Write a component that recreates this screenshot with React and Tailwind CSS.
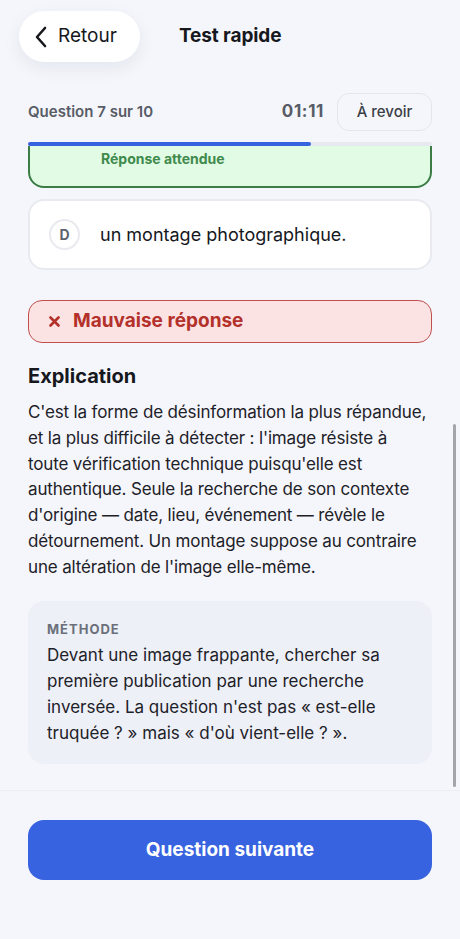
import { useState } from 'react';

// Lines broken as in the design
const explication = [
  "C'est la forme de désinformation la plus répandue,",
  "et la plus difficile à détecter : l'image résiste à",
  "toute vérification technique puisqu'elle est",
  'authentique. Seule la recherche de son contexte',
  "d'origine — date, lieu, événement — révèle le",
  'détournement. Un montage suppose au contraire',
  "une altération de l'image elle-même.",
];

const methode =
  "Devant une image frappante, chercher sa première publication par une recherche inversée. La question n'est pas « est-elle truquée ? » mais « d'où vient-elle ? ».";

export default function App() {
  const [current] = useState(7);
  const total = 10;

  return (
    <div className="h-[939px] flex flex-col bg-[#f4f6fb] text-[#16181d] overflow-hidden" style={{ fontFamily: 'Inter, "Noto Sans", sans-serif' }}>
      {/* Top bar */}
      <header className="pt-[11px] px-[19px] flex items-center">
        <button className="h-[51px] w-[121px] rounded-full bg-white shadow-[0_6px_18px_rgba(20,30,60,0.07)] flex items-center pl-[15px] gap-[10px] text-[19px] text-[#16181d]">
          <svg width="14" height="22" viewBox="0 0 14 22" fill="none">
            <path d="M11 2 L3 11 L11 20" stroke="#16181d" strokeWidth="2.6" strokeLinecap="round" strokeLinejoin="round" />
          </svg>
          Retour
        </button>
        <h1 className="ml-[39px] text-[19px] font-bold tracking-[-0.1px]">Test rapide</h1>
      </header>

      {/* Progress */}
      <div className="px-7 mt-[31px] h-[38px] flex items-center">
        <span className="text-[15px] font-semibold text-[#585c66]">Question {current} sur {total}</span>
        <span className="ml-auto text-[17px] font-bold text-[#585c66] tracking-[0.6px]">01:11</span>
        <button className="ml-[13px] h-[38px] w-[95px] rounded-xl border border-[#e3e6ec] text-[15px] font-medium text-[#3a3e47]">
          À revoir
        </button>
      </div>
      <div className="mx-7 mt-[11px] h-[4px] rounded-full bg-[#e6e9f0]">
        <div className="h-full rounded-full bg-[#3762e0]" style={{ width: `${(current / total) * 100}%` }} />
      </div>

      {/* Scrolled content (the top of the answer list is scrolled out of view) */}
      <div className="relative flex-1 overflow-hidden">
        <div className="px-7">
          <div className="mt-[-59px] rounded-2xl border-2 border-[#3b7d45] bg-[#e1fbe5] pl-[19px] pt-4 pb-[17px]">
            <div className="h-[40px]" />
            <div className="mt-1 pl-[52px] text-[14px] leading-[20px] font-bold text-[#3f8a4c]">Réponse attendue</div>
          </div>

          <div className="mt-[11px] h-[71px] rounded-2xl border-2 border-[#e8eaef] bg-white flex items-center pl-[19px] gap-[20px]">
            <span className="w-[31px] h-[31px] rounded-full border-2 border-[#e8eaef] text-[14px] font-bold text-[#5d626c] flex items-center justify-center">D</span>
            <span className="text-[18px] text-[#16181d]">un montage photographique.</span>
          </div>

          <div className="mt-[30px] h-[43px] rounded-[14px] border border-[#c0504d] bg-[#fce3e3] flex items-center pl-[20px] gap-[13px] text-[#b3302b]">
            <svg width="11" height="11" viewBox="0 0 11 11">
              <path d="M1.5 1.5 L9.5 9.5 M9.5 1.5 L1.5 9.5" stroke="#b3302b" strokeWidth="2.6" strokeLinecap="round" />
            </svg>
            <span className="text-[19px] font-bold">Mauvaise réponse</span>
          </div>

          <h2 className="mt-[19px] text-[20px] leading-[28px] font-bold">Explication</h2>
          <p className="mt-[10px] text-[17px] leading-[25.8px] tracking-[-0.15px] text-[#1e2128] whitespace-nowrap">
            {explication.map((line, i) => (
              <span key={i} className="block">{line}</span>
            ))}
          </p>

          <div className="mt-[20px] rounded-2xl bg-[#edf0f7] pl-[19px] pr-4 pt-5 pb-[18px]">
            <div className="text-[13px] leading-4 font-bold tracking-[1px] text-[#6a6f7a]">MÉTHODE</div>
            <p className="mt-[5px] text-[17px] leading-[26px] text-[#1e2128]">{methode}</p>
          </div>
        </div>

        {/* Overlay scrollbar */}
        <div className="absolute right-[4px] top-[278px] h-[363px] w-[3px] rounded-full bg-[#a3a5aa]" />
      </div>

      {/* Footer */}
      <footer className="h-[149px] border-t border-[#eceef3] px-7 pt-[29px]">
        <button className="w-full h-[60px] rounded-2xl bg-[#3762e0] text-white text-[19px] font-bold">
          Question suivante
        </button>
      </footer>
    </div>
  );
}
